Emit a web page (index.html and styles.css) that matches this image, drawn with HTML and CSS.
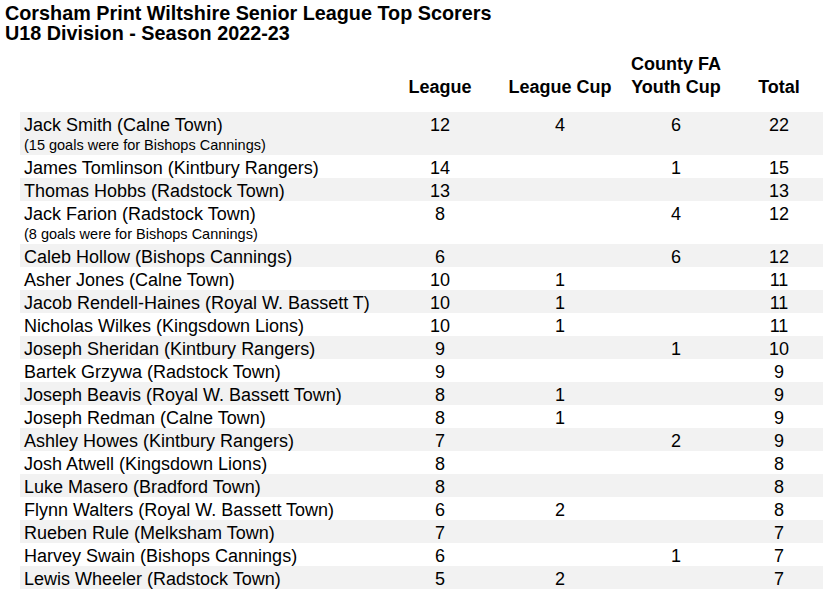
FILE: index.html
```html
<!DOCTYPE html>
<html>
<head>
<meta charset="utf-8">
<link rel="stylesheet" href="styles.css">
</head>
<body>
<h1 class="title">Corsham Print Wiltshire Senior League Top Scorers<br>U18 Division - Season 2022-23</h1>
<div class="table">
  <div class="row head">
    <div class="name"></div>
    <div class="num">League</div>
    <div class="num">League Cup</div>
    <div class="num">County FA<br>Youth Cup</div>
    <div class="num total">Total</div>
  </div>
  <div class="row alt">
    <div class="name">Jack Smith (Calne Town)<div class="note">(15 goals were for Bishops Cannings)</div></div>
    <div class="num">12</div><div class="num">4</div><div class="num">6</div><div class="num total">22</div>
  </div>
  <div class="row">
    <div class="name">James Tomlinson (Kintbury Rangers)</div>
    <div class="num">14</div><div class="num"></div><div class="num">1</div><div class="num total">15</div>
  </div>
  <div class="row alt">
    <div class="name">Thomas Hobbs (Radstock Town)</div>
    <div class="num">13</div><div class="num"></div><div class="num"></div><div class="num total">13</div>
  </div>
  <div class="row">
    <div class="name">Jack Farion (Radstock Town)<div class="note">(8 goals were for Bishops Cannings)</div></div>
    <div class="num">8</div><div class="num"></div><div class="num">4</div><div class="num total">12</div>
  </div>
  <div class="row alt">
    <div class="name">Caleb Hollow (Bishops Cannings)</div>
    <div class="num">6</div><div class="num"></div><div class="num">6</div><div class="num total">12</div>
  </div>
  <div class="row">
    <div class="name">Asher Jones (Calne Town)</div>
    <div class="num">10</div><div class="num">1</div><div class="num"></div><div class="num total">11</div>
  </div>
  <div class="row alt">
    <div class="name">Jacob Rendell-Haines (Royal W. Bassett T)</div>
    <div class="num">10</div><div class="num">1</div><div class="num"></div><div class="num total">11</div>
  </div>
  <div class="row">
    <div class="name">Nicholas Wilkes (Kingsdown Lions)</div>
    <div class="num">10</div><div class="num">1</div><div class="num"></div><div class="num total">11</div>
  </div>
  <div class="row alt">
    <div class="name">Joseph Sheridan (Kintbury Rangers)</div>
    <div class="num">9</div><div class="num"></div><div class="num">1</div><div class="num total">10</div>
  </div>
  <div class="row">
    <div class="name">Bartek Grzywa (Radstock Town)</div>
    <div class="num">9</div><div class="num"></div><div class="num"></div><div class="num total">9</div>
  </div>
  <div class="row alt">
    <div class="name">Joseph Beavis (Royal W. Bassett Town)</div>
    <div class="num">8</div><div class="num">1</div><div class="num"></div><div class="num total">9</div>
  </div>
  <div class="row">
    <div class="name">Joseph Redman (Calne Town)</div>
    <div class="num">8</div><div class="num">1</div><div class="num"></div><div class="num total">9</div>
  </div>
  <div class="row alt">
    <div class="name">Ashley Howes (Kintbury Rangers)</div>
    <div class="num">7</div><div class="num"></div><div class="num">2</div><div class="num total">9</div>
  </div>
  <div class="row">
    <div class="name">Josh Atwell (Kingsdown Lions)</div>
    <div class="num">8</div><div class="num"></div><div class="num"></div><div class="num total">8</div>
  </div>
  <div class="row alt">
    <div class="name">Luke Masero (Bradford Town)</div>
    <div class="num">8</div><div class="num"></div><div class="num"></div><div class="num total">8</div>
  </div>
  <div class="row">
    <div class="name">Flynn Walters (Royal W. Bassett Town)</div>
    <div class="num">6</div><div class="num">2</div><div class="num"></div><div class="num total">8</div>
  </div>
  <div class="row alt">
    <div class="name">Rueben Rule (Melksham Town)</div>
    <div class="num">7</div><div class="num"></div><div class="num"></div><div class="num total">7</div>
  </div>
  <div class="row">
    <div class="name">Harvey Swain (Bishops Cannings)</div>
    <div class="num">6</div><div class="num"></div><div class="num">1</div><div class="num total">7</div>
  </div>
  <div class="row alt">
    <div class="name">Lewis Wheeler (Radstock Town)</div>
    <div class="num">5</div><div class="num">2</div><div class="num"></div><div class="num total">7</div>
  </div>
</div>
</body>
</html>
```

FILE: styles.css
```css
html, body {
  margin: 0;
  padding: 0;
  background: #ffffff;
  color: #000000;
  font-family: "Liberation Sans", Arial, sans-serif;
}

.title {
  margin: 0;
  padding: 3px 0 0 5px;
  font-size: 19.8px;
  line-height: 20px;
  font-weight: bold;
}

.table {
  margin-left: 20px;
  width: 803px;
}

.row {
  display: grid;
  grid-template-columns: 380px 80px 160px 72px 111px;
  font-size: 18px;
  line-height: 20px;
}

.row.alt {
  background: #f2f2f2;
}

.row.head {
  height: 69px;
  box-sizing: border-box;
  padding-bottom: 13px;
  align-items: end;
  font-weight: bold;
  line-height: 23px;
}

.name {
  padding: 3px 0 0 4px;
  white-space: nowrap;
}

.note {
  font-size: 14.5px;
  line-height: 20px;
}

.num {
  display: flex;
  justify-content: center;
  text-align: center;
  white-space: nowrap;
  padding-top: 3px;
}

.head .name,
.head .num {
  padding-top: 0;
}

.head .num {
  align-items: flex-end;
}

.num.total {
  padding-left: 23px;
}
```
